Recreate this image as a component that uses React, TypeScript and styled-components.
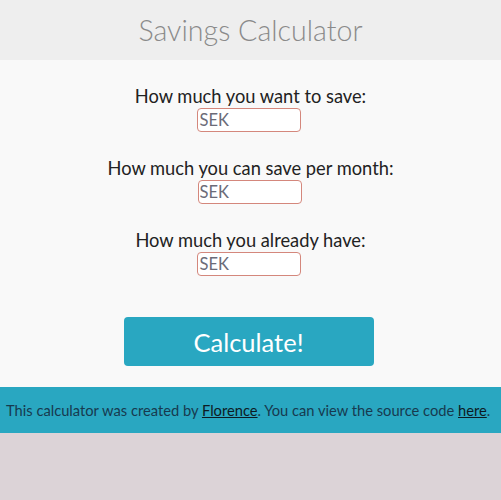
import React from "react";
import styled, { createGlobalStyle } from "styled-components";

const Global = createGlobalStyle`
  html, body { margin: 0; padding: 0; background: #dcd3d7; }
  body { font-family: Lato, "Open Sans", sans-serif; }
  * { box-sizing: border-box; }
`;

const Header = styled.header`
  height: 60px;
  background: #eeeeee;
  display: flex;
  align-items: center;
  justify-content: center;
`;

const Title = styled.h1`
  margin: 0;
  font-weight: 300;
  font-size: 28.6px;
  color: #8a8a8a;
`;

const Main = styled.main`
  background: #f9f9f9;
  padding: 24px 0 21px;
  display: flex;
  flex-direction: column;
  align-items: center;
`;

const Field = styled.div`
  display: flex;
  flex-direction: column;
  align-items: center;
  margin-bottom: 24px;
`;

const Label = styled.label`
  font-size: 18.3px;
  line-height: 24px;
  color: #222;
`;

const Input = styled.input`
  width: 104px;
  height: 24px;
  margin-left: -2px;
  border: 1px solid #d4877c;
  border-radius: 4px;
  background: #fff;
  font-family: inherit;
  font-size: 16.5px;
  padding: 0 1px;
  color: #333;
  &::placeholder { color: #6b6b78; }
`;

const Button = styled.button`
  margin-top: 17px;
  margin-left: -4px;
  width: 250px;
  height: 49px;
  border: none;
  border-radius: 4px;
  background: #29a7c1;
  color: #fff;
  font-family: inherit;
  font-size: 25.5px;
`;

const Footer = styled.footer`
  height: 46px;
  background: #29a7c1;
  display: flex;
  align-items: center;
  padding-left: 6px;
  font-size: 14.7px;
  color: #173a4f;
`;

const Link = styled.a`
  color: #0d1b24;
  text-decoration: underline;
`;

const fields = [
  "How much you want to save:",
  "How much you can save per month:",
  "How much you already have:",
];

export default function App() {
  return (
    <>
      <Global />
      <Header>
        <Title>Savings Calculator</Title>
      </Header>
      <Main>
        {fields.map((f) => (
          <Field key={f}>
            <Label>{f}</Label>
            <Input placeholder="SEK" />
          </Field>
        ))}
        <Button>Calculate!</Button>
      </Main>
      <Footer>
        <span>
          This calculator was created by <Link href="#">Florence</Link>. You can view the source code <Link href="#">here</Link>.
        </span>
      </Footer>
    </>
  );
}
